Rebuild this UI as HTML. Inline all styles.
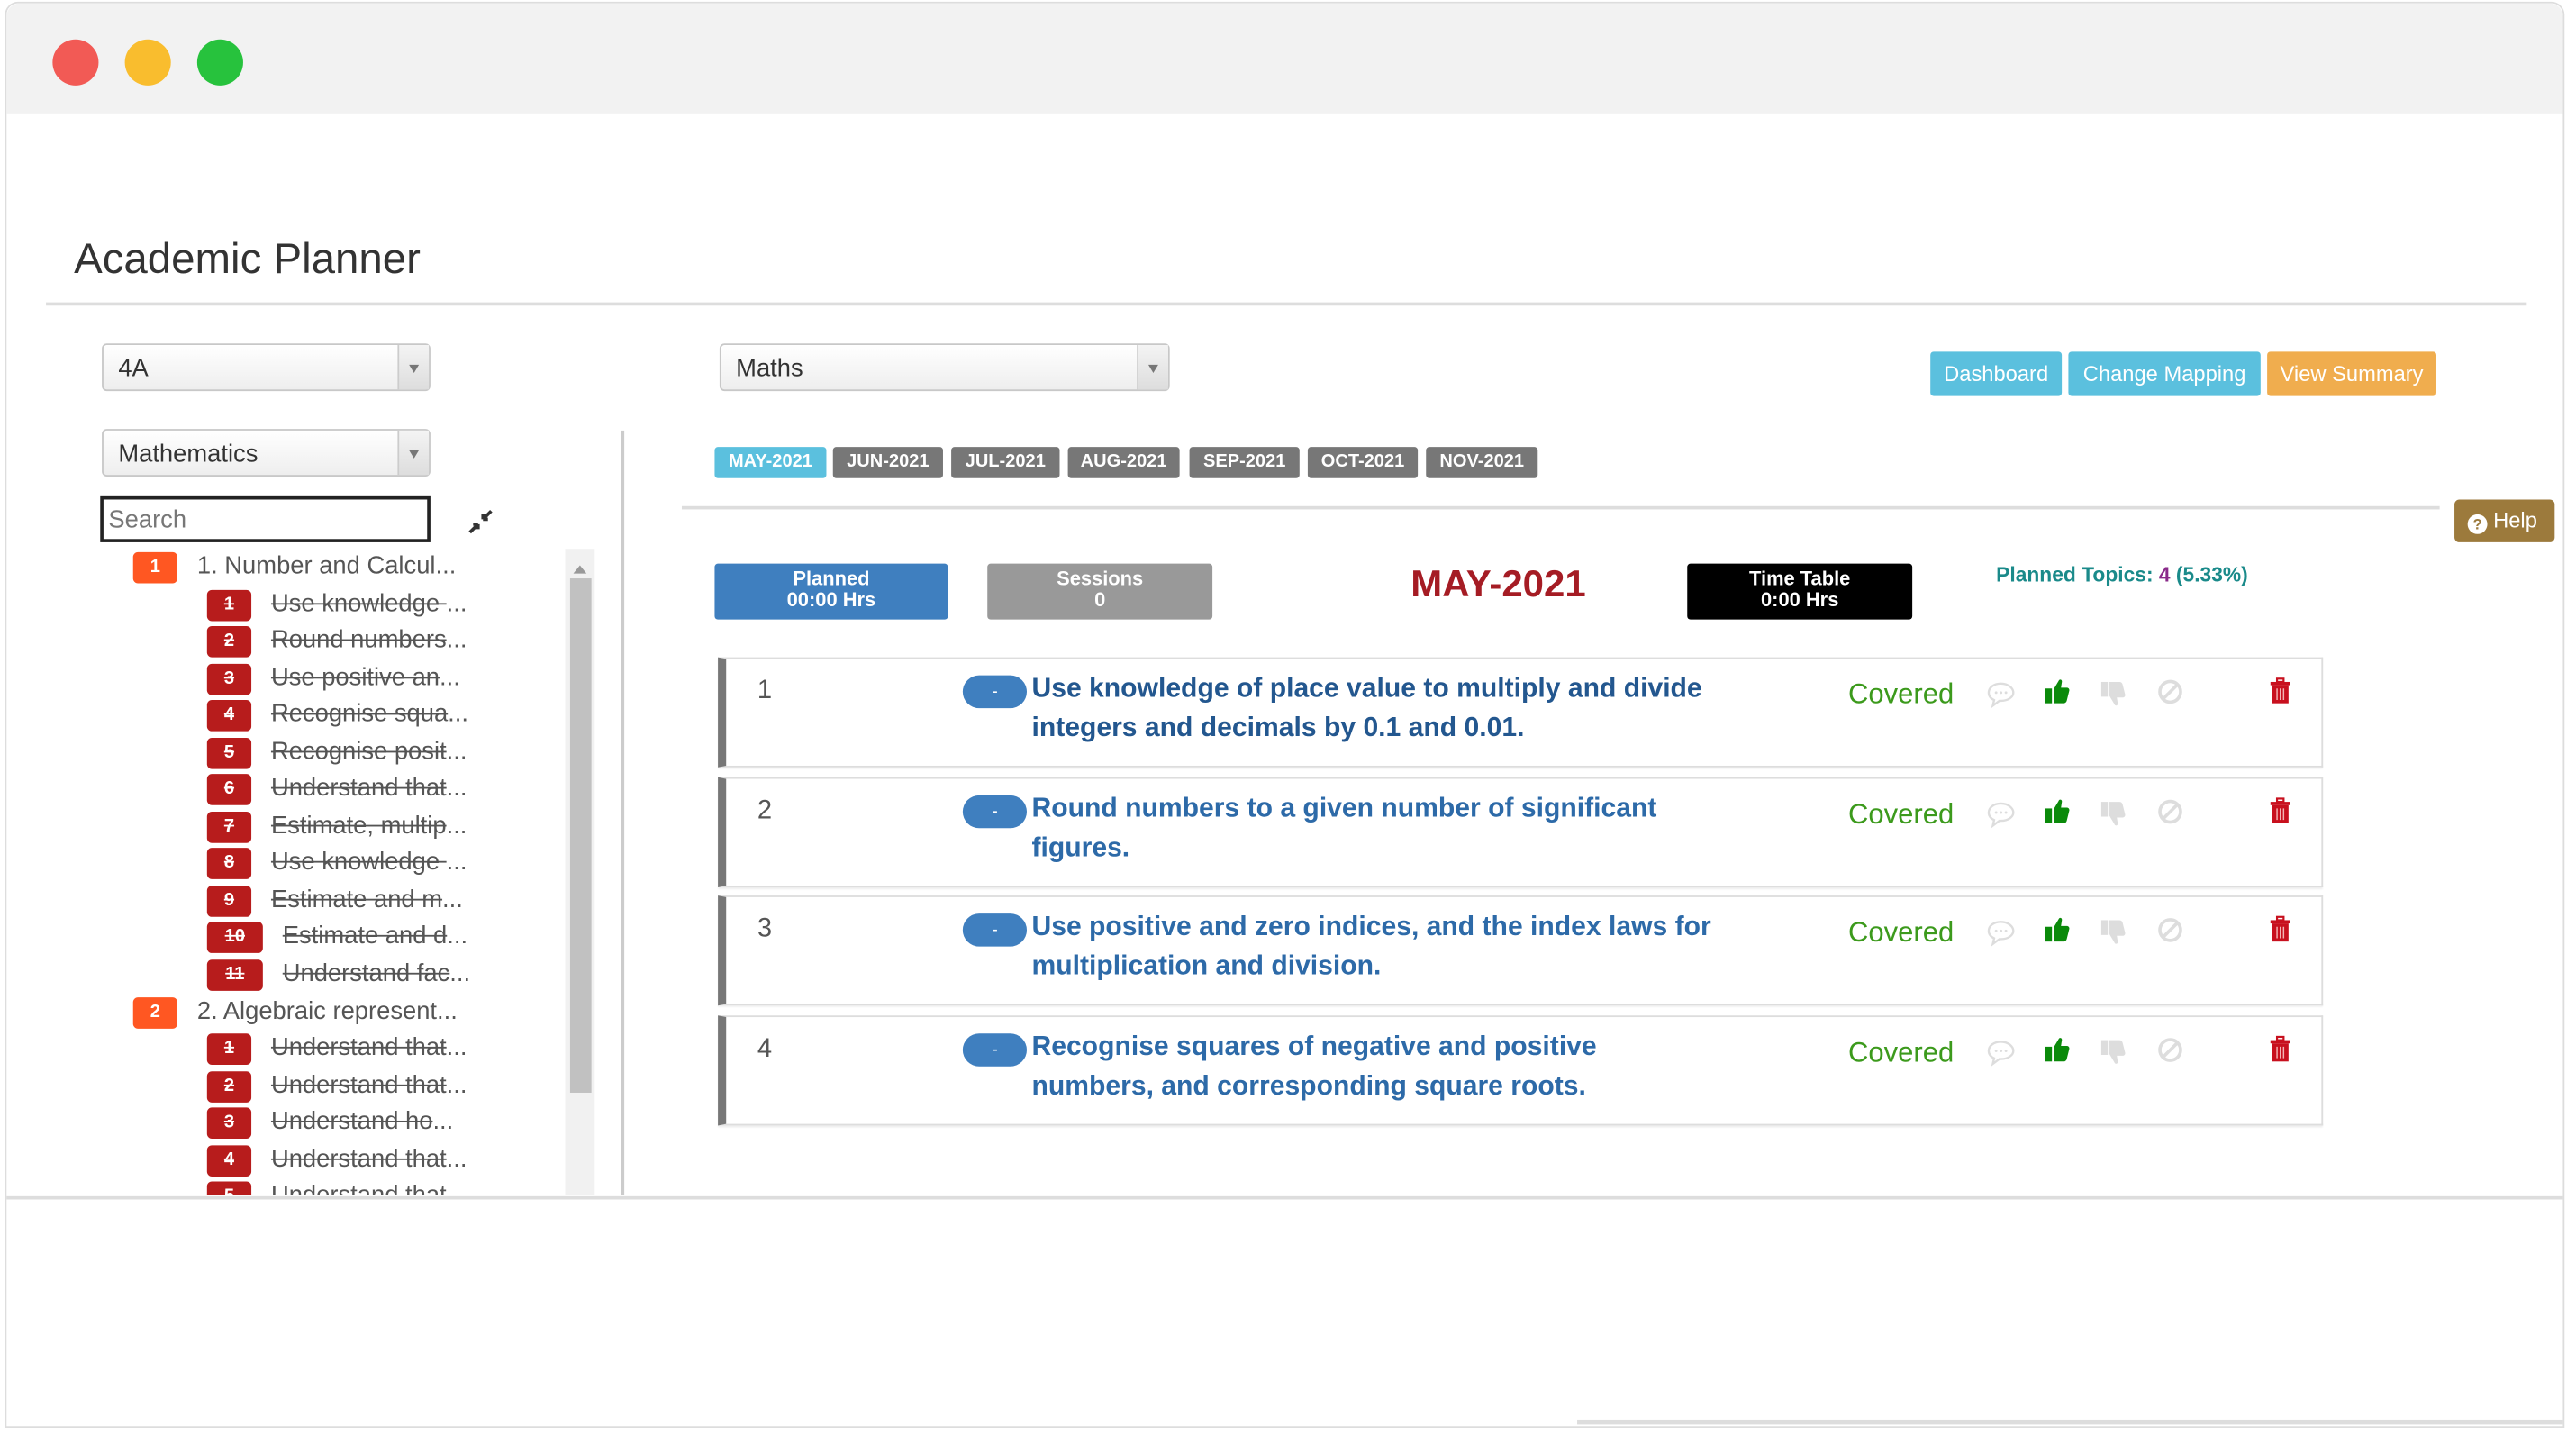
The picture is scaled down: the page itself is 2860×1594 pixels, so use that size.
<!DOCTYPE html>
<html><head><meta charset="utf-8"><style>
*{box-sizing:border-box;margin:0;padding:0}
html,body{width:2860px;height:1593px;overflow:hidden;background:#fff}
#w{position:absolute;left:0;top:0;width:1568px;height:874px;transform:scale(1.824);transform-origin:0 0;font-family:"Liberation Sans",Arial,sans-serif}
.a{position:absolute}
.dot{position:absolute;top:24px;width:28px;height:28px;border-radius:50%}
.sel{position:absolute;height:29px;border:1px solid #c8c8c8;border-radius:3px;background:linear-gradient(#fff,#eee);font-size:15px;color:#333;padding:6px 9px}
.sel .ar{position:absolute;right:0;top:0;width:19px;height:27px;border-left:1px solid #ccc;background:linear-gradient(#f4f4f4,#ddd)}
.sel .ar:after{content:"";position:absolute;left:6px;top:12px;border:3.5px solid transparent;border-top:5px solid #777}
.b{position:absolute;height:19px;border-radius:2px;color:#fff;font-size:11px;font-weight:bold;text-align:center;line-height:19px}
.tr{position:absolute;font-size:15px;color:#555;white-space:nowrap}
.tr s{color:#555}
.bd{position:absolute;width:27px;height:19px;border-radius:3px;color:#fff;font-size:11px;font-weight:bold;text-align:center;line-height:19px}
.btn{position:absolute;top:214px;height:27px;color:#fff;font-size:13px;line-height:27px;text-align:center;border-radius:2px}
.mt{position:absolute;top:272px;height:19px;background:#777;color:#fff;font-size:11px;font-weight:bold;line-height:19px;text-align:center;border-radius:2px}
.card{position:absolute;left:437px;width:977px;height:67px;border:1px solid #ddd;border-left:5px solid #777;box-shadow:0 1px 1px #eee}
.num{position:absolute;left:19px;top:11px;font-size:16px;color:#555}
.pill{position:absolute;left:144px;top:10px;width:39px;height:20px;border-radius:10px;background:#3f7fbf;color:#fff;font-size:11px;text-align:center;line-height:20px}
.tx{position:absolute;left:186px;top:6px;width:415px;font-size:16.5px;font-weight:bold;color:#2d6aa8;line-height:24px}
.cv{position:absolute;left:683px;top:12px;font-size:17px;color:#3c9a1c}
.ic{position:absolute;top:13px}
</style></head><body><div id="w">
<div class="a" style="left:3px;top:1px;width:1558px;height:868px;border:1px solid #ddd;border-radius:8px 8px 0 0"></div>
<div class="a" style="left:4px;top:2px;width:1556px;height:67px;background:#f2f2f2;border-radius:8px 8px 0 0"></div>
<div class="dot" style="left:32px;background:#f25a55"></div>
<div class="dot" style="left:76px;background:#f9bd2e"></div>
<div class="dot" style="left:120px;background:#27c23d"></div>
<div class="a" style="left:4px;top:728px;width:1556px;height:2px;background:#ddd"></div>
<div class="a" style="left:960px;top:864px;width:600px;height:3px;background:#ddd"></div>

<div class="a" style="left:45px;top:142px;font-size:26px;color:#333">Academic Planner</div>
<div class="a" style="left:28px;top:184px;width:1510px;height:2px;background:#ddd"></div>

<div class="sel" style="left:62px;top:209px;width:200px">4A<div class="ar"></div></div>
<div class="sel" style="left:62px;top:261px;width:200px">Mathematics<div class="ar"></div></div>
<div class="a" style="left:61px;top:302px;width:201px;height:28px;border:2px solid #222;font-size:15px;color:#777;padding:4px 3px">Search</div>
<svg class="a" style="left:285px;top:310px" width="15" height="15" viewBox="0 0 15 15"><path d="M1 14L6 9M6 9H3M6 9V12M14 1L9 6M9 6H12M9 6V3" stroke="#333" stroke-width="2" fill="none"/></svg>
<div class="a" style="left:378px;top:262px;width:2px;height:465px;background:#ccc"></div>
<div class="a" style="left:344px;top:334px;width:18px;height:393px;background:#f1f1f1"></div>
<div class="a" style="left:347px;top:352px;width:13px;height:313px;background:#c1c1c1"></div>
<div class="a" style="left:349px;top:340px;border:4px solid transparent;border-bottom:5px solid #999"></div>

<div class="a" style="left:0;top:334px;width:343px;height:393px;overflow:hidden">
<div class="bd" style="left:81px;top:2px;background:#ff5722">1</div><div class="tr" style="left:120px;top:2px">1. Number and Calcul...</div>
<div class="bd" style="left:126px;top:25px;background:#b71c1c"><s>1</s></div><div class="tr" style="left:165px;top:25px"><s>Use knowledge </s>...</div>
<div class="bd" style="left:126px;top:47px;background:#b71c1c"><s>2</s></div><div class="tr" style="left:165px;top:47px"><s>Round numbers</s>...</div>
<div class="bd" style="left:126px;top:70px;background:#b71c1c"><s>3</s></div><div class="tr" style="left:165px;top:70px"><s>Use positive an</s>...</div>
<div class="bd" style="left:126px;top:92px;background:#b71c1c"><s>4</s></div><div class="tr" style="left:165px;top:92px"><s>Recognise squa</s>...</div>
<div class="bd" style="left:126px;top:115px;background:#b71c1c"><s>5</s></div><div class="tr" style="left:165px;top:115px"><s>Recognise posit</s>...</div>
<div class="bd" style="left:126px;top:137px;background:#b71c1c"><s>6</s></div><div class="tr" style="left:165px;top:137px"><s>Understand that</s>...</div>
<div class="bd" style="left:126px;top:160px;background:#b71c1c"><s>7</s></div><div class="tr" style="left:165px;top:160px"><s>Estimate, multip</s>...</div>
<div class="bd" style="left:126px;top:182px;background:#b71c1c"><s>8</s></div><div class="tr" style="left:165px;top:182px"><s>Use knowledge </s>...</div>
<div class="bd" style="left:126px;top:205px;background:#b71c1c"><s>9</s></div><div class="tr" style="left:165px;top:205px"><s>Estimate and m</s>...</div>
<div class="bd" style="left:126px;top:227px;width:34px;background:#b71c1c"><s>10</s></div><div class="tr" style="left:172px;top:227px"><s>Estimate and d</s>...</div>
<div class="bd" style="left:126px;top:250px;width:34px;background:#b71c1c"><s>11</s></div><div class="tr" style="left:172px;top:250px"><s>Understand fac</s>...</div>
<div class="bd" style="left:81px;top:273px;background:#ff5722">2</div><div class="tr" style="left:120px;top:273px">2. Algebraic represent...</div>
<div class="bd" style="left:126px;top:295px;background:#b71c1c"><s>1</s></div><div class="tr" style="left:165px;top:295px"><s>Understand that</s>...</div>
<div class="bd" style="left:126px;top:318px;background:#b71c1c"><s>2</s></div><div class="tr" style="left:165px;top:318px"><s>Understand that</s>...</div>
<div class="bd" style="left:126px;top:340px;background:#b71c1c"><s>3</s></div><div class="tr" style="left:165px;top:340px"><s>Understand ho</s>...</div>
<div class="bd" style="left:126px;top:363px;background:#b71c1c"><s>4</s></div><div class="tr" style="left:165px;top:363px"><s>Understand that</s>...</div>
<div class="bd" style="left:126px;top:385px;background:#b71c1c"><s>5</s></div><div class="tr" style="left:165px;top:385px"><s>Understand that</s>...</div>
</div>

<div class="sel" style="left:438px;top:209px;width:274px">Maths<div class="ar"></div></div>
<div class="btn" style="left:1175px;width:80px;background:#5bc0de">Dashboard</div>
<div class="btn" style="left:1259px;width:117px;background:#5bc0de">Change Mapping</div>
<div class="btn" style="left:1380px;width:103px;background:#f0ad4e">View Summary</div>

<div class="mt" style="left:435px;width:68px;background:#5bc0de">MAY-2021</div>
<div class="mt" style="left:507px;width:67px">JUN-2021</div>
<div class="mt" style="left:579px;width:66px">JUL-2021</div>
<div class="mt" style="left:650px;width:68px">AUG-2021</div>
<div class="mt" style="left:724px;width:67px">SEP-2021</div>
<div class="mt" style="left:796px;width:67px">OCT-2021</div>
<div class="mt" style="left:868px;width:68px">NOV-2021</div>
<div class="a" style="left:415px;top:308px;width:1070px;height:2px;background:#ddd"></div>
<div class="a" style="left:1494px;top:304px;width:61px;height:26px;background:#9c7a3c;border-radius:3px;color:#fff;font-size:13px;line-height:26px;padding-left:8px"><span style="display:inline-block;width:12px;height:12px;border-radius:50%;background:#fff;color:#9c7a3c;font-size:9px;font-weight:bold;text-align:center;line-height:12px;vertical-align:-1px">?</span> Help</div>

<div class="b" style="left:435px;top:343px;width:142px;height:34px;background:#3f7fbf;line-height:13px;padding-top:3px;font-size:12px">Planned<br>00:00 Hrs</div>
<div class="b" style="left:601px;top:343px;width:137px;height:34px;background:#999;line-height:13px;padding-top:3px;font-size:12px">Sessions<br>0</div>
<div class="a" style="left:830px;top:342px;width:164px;text-align:center;font-size:23px;font-weight:bold;color:#a51c24">MAY-2021</div>
<div class="b" style="left:1027px;top:343px;width:137px;height:34px;background:#000;line-height:13px;padding-top:3px;font-size:12px">Time Table<br>0:00 Hrs</div>
<div class="a" style="left:1215px;top:343px;font-size:12.5px;font-weight:bold;color:#1a8a8a">Planned Topics: <span style="color:#8a2a8a">4</span> (5.33%)</div>

<div class="card" style="top:400px"><div class="num">1</div><div class="pill">-</div><div class="tx" style="color:#23578f">Use knowledge of place value to multiply and divide integers and decimals by 0.1 and 0.01.</div><div class="cv">Covered</div>ICONS</div>
<div class="card" style="top:473px"><div class="num">2</div><div class="pill">-</div><div class="tx">Round numbers to a given number of significant figures.</div><div class="cv">Covered</div>ICONS</div>
<div class="card" style="top:545px"><div class="num">3</div><div class="pill">-</div><div class="tx">Use positive and zero indices, and the index laws for multiplication and division.</div><div class="cv">Covered</div>ICONS</div>
<div class="card" style="top:618px"><div class="num">4</div><div class="pill">-</div><div class="tx">Recognise squares of negative and positive numbers, and corresponding square roots.</div><div class="cv">Covered</div>ICONS</div>
</div>
<script>
var ic='<svg class="ic" style="left:767px" width="18" height="17" viewBox="0 0 18 17"><path d="M9 2C4.5 2 1.5 4.5 1.5 7.5c0 2 1.3 3.6 3.3 4.5L4 15.5l4-3c.3 0 .7 0 1 0 4.5 0 7.5-2.5 7.5-5S13.5 2 9 2z" fill="none" stroke="#ddd" stroke-width="1.3"/><circle cx="6" cy="7.5" r=".8" fill="#ddd"/><circle cx="9" cy="7.5" r=".8" fill="#ddd"/><circle cx="12" cy="7.5" r=".8" fill="#ddd"/></svg>'
+'<svg class="ic" style="left:802px;top:11px" width="16" height="17" viewBox="0 0 16 17"><rect x="1" y="7" width="4" height="9" fill="#0a8a0a"/><path d="M6 7.5L9 2.5c.5-1.5 2.5-1 2 .8L10.5 6.5H14c1.2 0 1.8 1 1.5 2L14 14.5c-.3 1-1 1.5-2 1.5H6z" fill="#0a8a0a"/></svg>'
+'<svg class="ic" style="left:836px;top:13px" width="16" height="17" viewBox="0 0 16 17" transform="scale(1,-1)"><rect x="1" y="7" width="4" height="9" fill="#ddd"/><path d="M6 7.5L9 2.5c.5-1.5 2.5-1 2 .8L10.5 6.5H14c1.2 0 1.8 1 1.5 2L14 14.5c-.3 1-1 1.5-2 1.5H6z" fill="#ddd"/></svg>'
+'<svg class="ic" style="left:871px;top:12px" width="16" height="16" viewBox="0 0 16 16"><circle cx="8" cy="8" r="6.3" fill="none" stroke="#ddd" stroke-width="2"/><path d="M3.5 12.5L12.5 3.5" stroke="#ddd" stroke-width="2"/></svg>'
+'<svg class="ic" style="left:939px;top:11px" width="14" height="17" viewBox="0 0 14 17"><rect x="5" y="1" width="4" height="2" fill="none" stroke="#c8101e" stroke-width="1.2"/><rect x="1" y="3" width="12" height="2" fill="#c8101e"/><rect x="2" y="5" width="10" height="11" fill="#c8101e"/><path d="M5 7v7M7 7v7M9 7v7" stroke="#f3b5b5" stroke-width=".8"/></svg>';
document.querySelectorAll('.card').forEach(function(c){c.innerHTML=c.innerHTML.replace('ICONS',ic);});
</script>
</body></html>
